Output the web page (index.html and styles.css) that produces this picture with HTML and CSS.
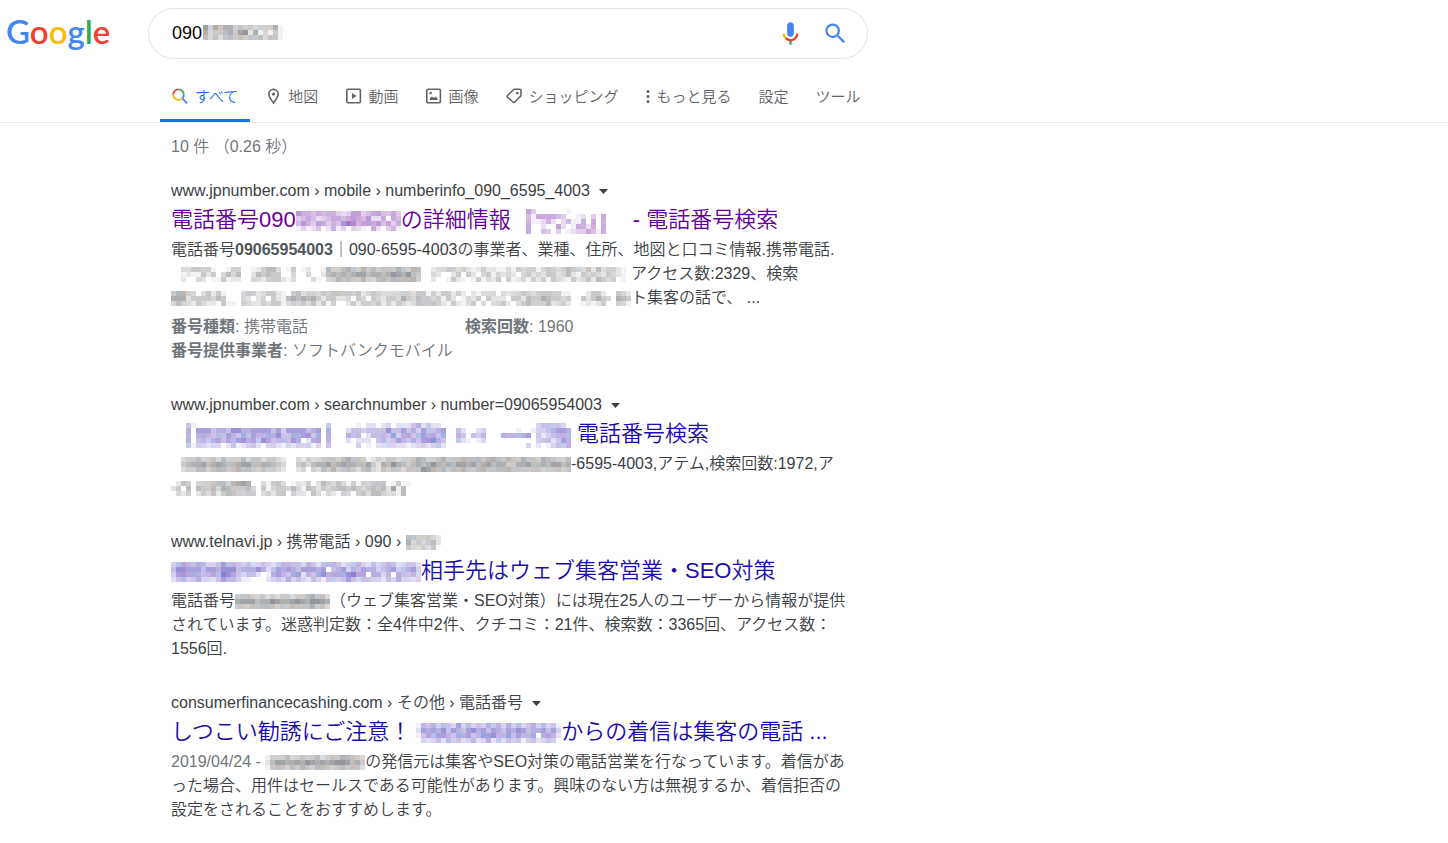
FILE: index.html
```html
<!DOCTYPE html>
<html lang="ja">
<head>
<meta charset="utf-8">
<meta name="viewport" content="width=device-width, initial-scale=1">
<title>Google 検索</title>
<link rel="stylesheet" href="styles.css">
</head>
<body>
<header class="header">
  <div class="topbar">
    <a class="logo" href="#"><span class="blue">G</span><span class="red">o</span><span class="yellow">o</span><span class="blue">g</span><span class="green">l</span><span class="red">e</span></a>
    <form class="search" role="search">
      <input class="search-input" type="text" value="090" aria-label="検索">
      <span class="mosaic search-mask" data-tone="gray" data-rows="7475664544344461|6344564782613141|5353554545453551"></span>
      <button class="icon-button" type="button" aria-label="音声検索">
        <svg width="27" height="27" viewBox="0 0 24 24"><path fill="#4285f4" d="M12 15c1.66 0 3-1.31 3-2.97V5c0-1.66-1.34-3-3-3S9 3.34 9 5v7.03C9 13.69 10.34 15 12 15z"/><path fill="#34a853" d="M11 18.08h2V22h-2z"/><path fill="#fbbc05" d="M7.05 16.87C5.78 15.6 5 13.9 5 12h2c0 1.37.56 2.62 1.47 3.5z"/><path fill="#ea4335" d="M12 16.93a4.97 4.97 0 0 1-3.54-1.55l-1.41 1.49A7 7 0 0 0 12 19c3.87 0 6.99-2.92 6.99-7h-1.99c0 2.92-2.24 4.93-5 4.93z"/></svg>
      </button>
      <button class="icon-button" type="submit" aria-label="Google 検索">
        <svg width="27" height="27" viewBox="0 0 24 24"><path fill="#4285f4" d="M15.5 14h-.79l-.28-.27A6.47 6.47 0 0 0 16 9.5 6.5 6.5 0 1 0 9.5 16c1.61 0 3.09-.59 4.23-1.57l.27.28v.79l5 4.99L20.49 19zm-6 0C7.01 14 5 11.99 5 9.5S7.01 5 9.5 5 14 7.01 14 9.5 11.99 14 9.5 14z"/></svg>
      </button>
    </form>
  </div>
  <nav class="tabs">
    <a class="tab active" href="#"><svg width="18" height="18" viewBox="0 0 18 18" fill="none" stroke-width="1.700"><path stroke="#ea4335" d="M1.200 6.700A5.300 5.300 0 0 1 6.500 1.400"/><path stroke="#34a853" d="M6.500 1.400a5.300 5.300 0 0 1 5.300 5.300"/><path stroke="#4285f4" d="M11.800 6.700a5.300 5.300 0 0 1-1.600 3.700l5 5"/><path stroke="#fbbc04" d="M1.200 6.700a5.300 5.300 0 0 0 9 3.700"/></svg>すべて</a>
    <a class="tab" href="#"><svg width="18" height="18" viewBox="0 0 18 18" fill="none" stroke="#5f6368" stroke-width="1.600"><path d="M8.500 15C5.500 11.200 3.800 9 3.800 6.100a4.700 4.700 0 0 1 9.400 0C13.200 9 11.500 11.200 8.500 15z"/><circle cx="8.500" cy="6.100" r="1.600" fill="#5f6368" stroke="none"/></svg>地図</a>
    <a class="tab" href="#"><svg width="18" height="18" viewBox="0 0 18 18"><rect x="1.800" y="1.300" width="13.600" height="13.400" rx="1.200" fill="none" stroke="#5f6368" stroke-width="1.600"/><path d="M7 5v6l4.500-3z" fill="#5f6368"/></svg>動画</a>
    <a class="tab" href="#"><svg width="18" height="18" viewBox="0 0 18 18"><rect x="1.800" y="1.300" width="13.600" height="13.400" rx="1.200" fill="none" stroke="#5f6368" stroke-width="1.600"/><path d="M5 12v-2l2-1.500L9 10l1.500-1.500 2 2V12z" fill="#5f6368"/><circle cx="5.600" cy="5" r="1.300" fill="#5f6368"/></svg>画像</a>
    <a class="tab" href="#"><svg width="18" height="18" viewBox="0 0 18 18"><path d="M9.500 1.300h5.200q1.300 0 1.300 1.300v4.500q0 .7-.5 1.200L9.800 14q-.9.900-1.800 0L2.500 9.300q-.9-.9 0-1.800L8.500 1.800q.4-.5 1-.5z" fill="none" stroke="#5f6368" stroke-width="1.600"/><circle cx="12.200" cy="5" r="1.300" fill="#5f6368"/></svg>ショッピング</a>
    <a class="tab" href="#"><svg width="6" height="18" viewBox="0 0 6 18" fill="#5f6368"><circle cx="3" cy="3.500" r="1.500"/><circle cx="3" cy="8.500" r="1.500"/><circle cx="3" cy="13.500" r="1.500"/></svg>もっと見る</a>
    <a class="tab" href="#">設定</a>
    <a class="tab" href="#">ツール</a>
  </nav>
</header>

<main class="main">
  <p class="stats">10 件 （0.26 秒）</p>

  <article class="result">
    <div class="crumb">www.jpnumber.com › mobile › numberinfo_090_6595_4003<button class="more" type="button" aria-label="メニュー"><svg width="9" height="5" viewBox="0 0 9 5"><path d="M0 0h9L4.500 5z" fill="#3c4043"/></svg></button></div>
    <h3 class="title"><a class="visited" href="#">電話番号090<span class="mosaic" data-tone="purple" data-rows="655454553236634564453|345423455456546225054|465365354787566564635|131240251303210520351"></span>の詳細情報<span class="mosaic" data-tone="purple" data-rows="00063000000100000000|00041555543001203050|00051125202411505050|00050020062015525050|00050043030123354150"></span>　- 電話番号検索</a></h3>
    <p class="snippet">電話番号<b>09065954003</b>｜090-6595-4003の事業者、業種、住所、地図と口コミ情報.携帯電話.<br>
      <span class="mosaic" data-tone="gray" data-rows="00334444100144001245530140120016445654645455465465002334434212422113143441344345443525344210|00121142403535002545440030030025656567756656876854003200240420341323203423244235214343243210|00200320114122003324442130003103465544643565655664002001421014132404123142414321423525434010"></span>アクセス数:2329、検索<br>
      <span class="mosaic" data-tone="gray" data-rows="46643035241000344234421045344344554445234433334434414244242021333032334434444411000244200432|66624444354000320230421565656424422304304324436435443414201324042220442544654434004246430654|35432432204110432243441343435241400242443424243235445421421340303342034544452342001212400431"></span>ト集客の話で、 ...</p>
    <dl class="facts">
      <div><dt>番号種類</dt><dd>: 携帯電話</dd></div>
      <div><dt>検索回数</dt><dd>: 1960</dd></div>
      <div><dt>番号提供事業者</dt><dd>: ソフトバンクモバイル</dd></div>
    </dl>
  </article>

  <article class="result">
    <div class="crumb">www.jpnumber.com › searchnumber › number=09065954003<button class="more" type="button" aria-label="メニュー"><svg width="9" height="5" viewBox="0 0 9 5"><path d="M0 0h9L4.500 5z" fill="#3c4043"/></svg></button></div>
    <h3 class="title"><a href="#"><span class="mosaic" data-tone="indigo" data-rows="00041000000000000000000000000004000001022023022245242200000000000000000003444430|00050666455477556666463666645605000244344447446453644560042002300000010013345665|00050555454654646556574465674605000545024454735645656460054043500055555604234555|00050454564656756476455475025605000202220453465454678540042101300000000003442465|00041332330241234203321323331304000003010223322123323420000000000000000302013445"></span> 電話番号検索</a></h3>
    <p class="snippet"><span class="mosaic" data-tone="gray" data-rows="00344544535444535534432003243345545655412435434456544564556556566556546554655445|00456675676556775566543004535667567665574265865456568656577675675664466755657756|00344554565456554454432002304354645543563254543555876564556545655556554455444545"></span>-6595-4003,アテム,検索回数:1972,ア<br>
      <span class="mosaic" data-tone="gray" data-rows="025403445554677600314530122402543531414345501411|240505445365444530413443531542434554543454527150|032402435245544440342450422053032043045355433150"></span></p>
  </article>

  <article class="result">
    <div class="crumb">www.telnavi.jp › 携帯電話 › 090 › <span class="mosaic" data-tone="gray" data-rows="5544432|6343452|4334340"></span></div>
    <h3 class="title"><a href="#"><span class="mosaic" data-tone="indigo" data-rows="35654553346554343343245544354245542345324345423442|47766646657774555752465654666560456354655345634563|36766545658764344201565466254675666786605535054453|24534533246553110002343534324314434643443324353323"></span>相手先はウェブ集客営業・SEO対策</a></h3>
    <p class="snippet">電話番号<span class="mosaic" data-tone="gray" data-rows="4554343434434456553|6777566876678768876|4445555545455556453"></span>（ウェブ集客営業・SEO対策）には現在25人のユーザーから情報が提供<br>されています。迷惑判定数：全4件中2件、クチコミ：21件、検索数：3365回、アクセス数：<br>1556回.</p>
  </article>

  <article class="result">
    <div class="crumb">consumerfinancecashing.com › その他 › 電話番号<button class="more" type="button" aria-label="メニュー"><svg width="9" height="5" viewBox="0 0 9 5"><path d="M0 0h9L4.500 5z" fill="#3c4043"/></svg></button></div>
    <h3 class="title"><a href="#">しつこい勧誘にご注意！<span class="mosaic" data-tone="indigo" data-rows="015453543635343545353534535341|026565746546756465465764556463|014656654656457675574655605652|003234253423523524243413423430"></span>からの着信は集客の電話 ...</a></h3>
    <p class="snippet"><span class="date">2019/04/24 - </span><span class="mosaic" data-tone="gray" data-rows="14445345445345466543|25776676876767887564|14554546545554554553"></span>の発信元は集客やSEO対策の電話営業を行なっています。着信があ<br>った場合、用件はセールスである可能性があります。興味のない方は無視するか、着信拒否の<br>設定をされることをおすすめします。</p>
  </article>
</main>
<script src="mosaic.js"></script>
</body>
</html>
```
FILE: styles.css
```css
* { box-sizing: border-box; }

body {
  margin: 0;
  background: #fff;
  color: #3c4043;
  font: 16px/24px "Liberation Sans", "Noto Sans CJK JP", sans-serif;
  font-weight: 350;
}

a { color: inherit; text-decoration: none; }
b, dt { font-weight: 700; }

.header { border-bottom: 1px solid #e8e8e8; }

.topbar { display: flex; align-items: flex-start; padding-top: 8px; }

.logo {
  flex: 0 0 148px;
  padding-left: 6px;
  font: 600 33px/47px Lato, sans-serif;
}

.blue { color: #4285f4; }
.red { color: #ea4335; }
.yellow { color: #fbbc05; }
.green { color: #34a853; }

.search {
  position: relative;
  display: flex;
  align-items: center;
  flex: 0 1 720px;
  height: 51px;
  padding: 0 18px 0 23px;
  border: 1px solid #dfe1e5;
  border-radius: 26px;
}

.search-input {
  flex: 1;
  min-width: 0;
  padding: 0 0 2px;
  border: 0;
  outline: 0;
  background: none;
  color: #000;
  font: 18px/24px "Liberation Sans", sans-serif;
}

.search-mask { position: absolute; left: 54px; top: 16px; }

.icon-button, .more {
  display: inline-flex;
  align-items: center;
  justify-content: center;
  padding: 0;
  border: 0;
  background: none;
}

.icon-button { width: 45px; height: 40px; }
.icon-button:last-child { width: 44px; margin-right: -8px; }

.tabs {
  display: flex;
  gap: 3px;
  padding: 12px 0 0 160px;
  color: #5f6368;
  font-size: 15px;
  white-space: nowrap;
}

.tab {
  display: flex;
  align-items: center;
  gap: 5px;
  height: 51px;
  padding: 3px 12px 0;
  border-bottom: 3px solid transparent;
}

.tab.active { color: #1a73e8; border-color: #1a73e8; }

.main { padding: 12px 20px 20px 171px; }

.stats { margin: 0 0 20px; color: #70757a; }

.result { max-width: 720px; margin-bottom: 30px; }

.more { margin-left: 9px; height: 20px; vertical-align: middle; }
.crumb { height: 24px; }

.title {
  margin: 0 0 2px;
  color: #1a0dab;
  font-size: 22px;
  font-weight: 350;
  line-height: 33px;
  white-space: nowrap;
}

.visited { color: #609; }

.snippet { margin: 0; white-space: nowrap; }
.snippet b { color: #52565a; }
.date { color: #70757a; }

.facts {
  display: grid;
  grid-template-columns: 294px 1fr;
  margin: 5px 0 0;
  color: #70757a;
}

.facts dt, .facts dd { display: inline; margin: 0; }

.mosaic { display: inline-flex; vertical-align: middle; }
```
FILE: mosaic.js
```js
// Draws pixelated censor strips: each digit in data-rows is the depth of one 5px cell.
const CELL = 5;
const TONES = {
  gray: [[95, 97, 102], [125, 108, 98], [100, 118, 135]],
  purple: [[125, 50, 170], [145, 65, 170], [115, 70, 190]],
  indigo: [[80, 65, 185], [115, 70, 190], [70, 100, 200]]
};

document.querySelectorAll(".mosaic").forEach((host) => {
  const rows = host.dataset.rows.split("|");
  const tones = TONES[host.dataset.tone];
  const cols = Math.max(...rows.map((row) => row.length));
  let cells = "";
  rows.forEach((row, y) => {
    [...row].forEach((depth, x) => {
      const hue = tones[(x * 7 + y * 5 + x * y * 3) % 5 % 3];
      cells += `<rect x="${x * CELL}" y="${y * CELL}" width="${CELL}" height="${CELL}" fill="rgb(${hue})" fill-opacity="${depth / 12}"/>`;
    });
  });
  host.innerHTML = `<svg width="${cols * CELL}" height="${rows.length * CELL}" shape-rendering="crispEdges" aria-hidden="true">${cells}</svg>`;
});
```
